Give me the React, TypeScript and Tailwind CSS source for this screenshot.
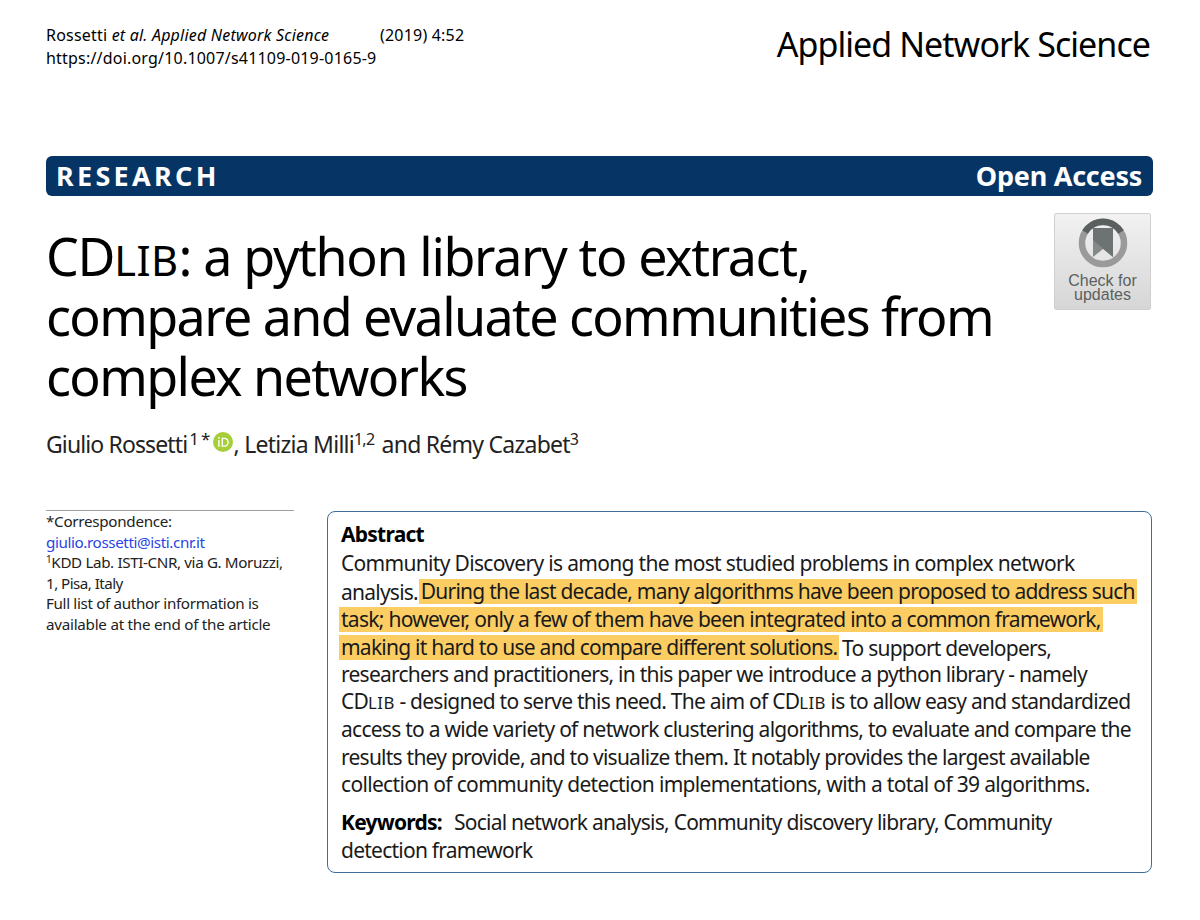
const sans = "font-['Noto_Sans','Open_Sans',sans-serif]"

function Mark({ children }: { children: React.ReactNode }) {
  return <span className="bg-[#fbcd63] inline-block h-[25px] leading-[25px] px-[2px] -mx-[2px] align-top">{children}</span>
}

function CrossMark() {
  return (
    <div className="w-[97px] h-[97px] shrink-0 mr-[2px] rounded-[2px] border border-[#d0d0d0] bg-gradient-to-b from-[#f2f2f2] to-[#d6d6d6] flex flex-col items-center pt-[4px]">
      <svg width="50" height="50" viewBox="0 0 50 50">
        <circle cx="25" cy="25" r="21" fill="none" stroke="#9a9a9a" strokeWidth="6.5" />
        <path d="M7 14 A21 21 0 0 1 43 14" fill="none" stroke="#5a5f60" strokeWidth="6.5" />
        <path d="M15 10 H35 V39 L25 31 L15 39 Z" fill="#848a8a" />
        <path d="M15 10 H35 V39 L15 22 Z" fill="#6d7373" />
      </svg>
      <div className="font-['Liberation_Sans',sans-serif] text-[16px] leading-[14px] text-[#5c5f60] text-center mt-[6px]">
        Check for
        <br />
        updates
      </div>
    </div>
  )
}

function Orcid() {
  return (
    <svg width="20" height="20" viewBox="0 0 20 20" className="inline-block -ml-[5px] mr-[1px] align-[1px]">
      <circle cx="10" cy="10" r="10" fill="#a6ce39" />
      <rect x="5.2" y="8" width="1.4" height="6.8" fill="#fff" />
      <circle cx="5.9" cy="5.9" r="0.9" fill="#fff" />
      <path d="M8.6 5.8 H11.6 C14.6 5.8 15.8 8 15.8 10.3 C15.8 12.8 14.2 14.8 11.6 14.8 H8.6 Z M10 7 V13.6 H11.5 C13.6 13.6 14.4 12 14.4 10.3 C14.4 8.6 13.5 7 11.5 7 Z" fill="#fff" fillRule="evenodd" />
    </svg>
  )
}

export default function App() {
  return (
    <div className={`${sans} w-[1200px] h-[920px] bg-white text-[#1a1a1a] overflow-hidden pl-[46px] pr-[47px] pt-[25px]`}>
      {/* running header */}
      <div className="flex justify-between h-[131px]">
        <div className="text-[16px] leading-[23px] tracking-[0.2px] text-black -mt-[1px]">
          <div className="flex">
            <div className="w-[334px]">
              Rossetti <i>et al. Applied Network Science</i>
            </div>
            <div>(2019) 4:52</div>
          </div>
          <div>https://doi.org/10.1007/s41109-019-0165-9</div>
        </div>
        <div className="text-[34px] leading-[40px] tracking-[-0.95px] text-black -mt-[1px] pr-[3px]">Applied Network Science</div>
      </div>

      {/* banner */}
      <div className="h-[40px] rounded-[6px] bg-[#063565] text-white flex items-center justify-between pl-[10px] pr-[11px] font-bold">
        <span className="text-[27px] tracking-[3.3px]">RESEARCH</span>
        <span className="text-[27px] tracking-[-0.25px]">Open Access</span>
      </div>

      {/* title */}
      <div className="flex justify-between mt-[17px]">
        <h1 className="text-[52px] leading-[60px] tracking-[-1.6px] text-black pt-[13px]">
          <span className="tracking-[-1.35px]">
            CD<span className="text-[0.8em] leading-[0] tracking-[0.5px]">LIB</span>: a python library to extract,
          </span>
          <br />
          compare and evaluate communities from
          <br />
          complex networks
        </h1>
        <CrossMark />
      </div>

      {/* authors */}
      <div className="text-[23px] leading-[30px] tracking-[-0.75px] mt-[23px] text-[#222]">
        <span className="tracking-[-0.88px]">Giulio Rossetti</span>
        <sup className="text-[17px] leading-[0] ml-[2px] tracking-[2px]">1*</sup> <Orcid />, Letizia Milli<sup className="text-[16px] leading-[0] mr-[2px]">1,2</sup> and Rémy Cazabet<sup className="text-[16px] leading-[0]">3</sup>
      </div>

      <div className="flex items-start mt-[51px] gap-[33px]">
        {/* correspondence */}
        <div className="w-[248px] shrink-0 border-t border-[#a0a0a0] text-[15.2px] leading-[20.6px] tracking-[-0.28px] text-[#222]">
          *Correspondence:
          <br />
          <span className="text-[#2a45e8] tracking-[-0.39px]">giulio.rossetti@isti.cnr.it</span>
          <br />
          <span className="tracking-[-0.37px]">
            <sup className="text-[10px] leading-[0]">1</sup>KDD Lab. ISTI-CNR, via G. Moruzzi,
          </span>
          <br />
          <span className="tracking-[-0.55px]">1, Pisa, Italy</span>
          <br />
          <span className="tracking-[-0.34px]">Full list of author information is</span>
          <br />
          <span className="tracking-[-0.25px]">available at the end of the article</span>
        </div>

        {/* abstract */}
        <div className="w-[825px] h-[362px] mt-[1px] rounded-[8px] border border-[#3f6c99] pl-[13px] pr-[10px] pt-[9px] text-[21px] leading-[27.7px] tracking-[-0.76px] text-[#1a1a1a]">
          <div className="font-bold text-black mb-[1px]">Abstract</div>
          <div className="tracking-[-0.68px]">Community Discovery is among the most studied problems in complex network</div>
          <div className="mt-[2px]">
            analysis. <span className="-ml-[2px] inline-block"><Mark>During the last decade, many algorithms have been proposed to address such</Mark></span>
          </div>
          <div className="tracking-[-0.71px]">
            <Mark>task; however, only a few of them have been integrated into a common framework,</Mark>
          </div>
          <div>
            <Mark>making it hard to use and compare different solutions.</Mark> To support developers,
          </div>
          <div className="-mt-[2px]">researchers and practitioners, in this paper we introduce a python library - namely</div>
          <div>
            CD<span className="text-[0.8em] leading-[0] tracking-[0.4px]">LIB</span> - designed to serve this need. The aim of CD<span className="text-[0.8em] leading-[0] tracking-[0.4px]">LIB</span> is to allow easy and standardized
          </div>
          <div className="tracking-[-0.74px]">access to a wide variety of network clustering algorithms, to evaluate and compare the</div>
          <div>results they provide, and to visualize them. It notably provides the largest available</div>
          <div className="tracking-[-0.67px]">collection of community detection implementations, with a total of 39 algorithms.</div>
          <div className="mt-[10px]">
            <b className="text-black mr-[12px]">Keywords:</b>Social network analysis, Community discovery library, Community
          </div>
          <div>detection framework</div>
        </div>
      </div>
    </div>
  )
}
